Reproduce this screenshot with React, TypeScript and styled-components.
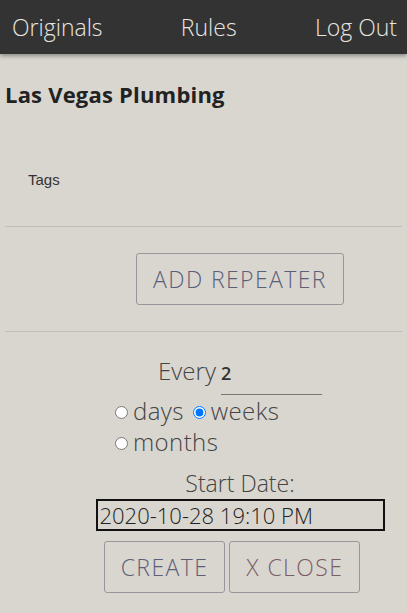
import React from "react";
import styled, { createGlobalStyle } from "styled-components";

const GlobalStyle = createGlobalStyle`
  * { box-sizing: border-box; }
  body {
    margin: 0;
    background: #d9d6d0;
    font-family: "Open Sans", "Lato", sans-serif;
    color: #333;
  }
`;

const NavBar = styled.nav`
  height: 54px;
  background: #333333;
  display: flex;
  align-items: center;
  justify-content: space-between;
  padding: 0 10px 0 12px;
  box-shadow: 0 2px 4px rgba(0, 0, 0, 0.35);
`;

const NavLink = styled.a`
  color: #e8e6e1;
  font-size: 23px;
  font-weight: 300;
  text-decoration: none;
`;

const Page = styled.main`
  padding: 0 5px;
`;

const Title = styled.h2`
  margin: 25px 0 0;
  font-size: 22px;
  font-weight: 700;
  letter-spacing: 0.2px;
  color: #222;
`;

const TagsLabel = styled.div`
  margin: 62px 0 0 23px;
  font-family: "Liberation Sans", Arial, sans-serif;
  font-size: 15px;
  color: #333;
`;

const Divider = styled.hr<{ $flush?: boolean }>`
  margin: ${(p) => (p.$flush ? "0" : "38px 0 0")};
  border: 0;
  border-top: 1px solid #c2bfba;
`;

const Centered = styled.div`
  display: flex;
  flex-direction: column;
  align-items: center;
  padding-left: 73px;
`;

const Button = styled.button<{ $tone: "blue" | "red" }>`
  background: transparent;
  border: 1px solid #98969a;
  border-radius: 3px;
  height: 52px;
  padding: 0 16px;
  font-family: "Open Sans", "Lato", sans-serif;
  font-size: 23px;
  font-weight: 300;
  letter-spacing: 1.4px;
  color: ${(p) => (p.$tone === "blue" ? "#5b6079" : "#7d5c64")};
`;

const RepeaterRow = styled(Centered)`
  margin-top: 26px;
  margin-bottom: 26px;
`;

const Form = styled(Centered)`
  margin-top: 22px;
`;

const EveryRow = styled.div`
  display: flex;
  align-items: baseline;
  font-size: 24px;
  font-weight: 300;
  color: #444;
`;

const NumberInput = styled.input`
  width: 101px;
  margin-left: 5px;
  border: 0;
  border-bottom: 1px solid #777;
  background: transparent;
  font-family: "Open Sans", sans-serif;
  font-size: 18px;
  font-weight: 600;
  color: #333;
  padding: 0 0 9px;
  outline: none;
`;

const RadioGroup = styled.div`
  width: 190px;
  margin-left: -60px;
  display: flex;
  flex-wrap: wrap;
  column-gap: 9px;
`;

const RadioLabel = styled.label`
  display: flex;
  align-items: center;
  height: 31px;
  font-size: 24px;
  font-weight: 300;
  letter-spacing: 0.4px;
  color: #444;
  input {
    margin: 3px 5px 0 0;
    width: 13px;
    height: 13px;
  }
`;

const StartLabel = styled.div`
  margin-top: 10px;
  font-size: 23px;
  font-weight: 300;
  color: #444;
`;

const DateInput = styled.input`
  width: 289px;
  height: 32px;
  border: 2px solid #111;
  background: transparent;
  padding: 0 2px;
  font-family: "Open Sans", sans-serif;
  font-size: 22px;
  font-weight: 300;
  color: #222;
`;

const ButtonRow = styled.div`
  margin-top: 10px;
  margin-left: -16px;
  display: flex;
  gap: 4px;
`;

export default function App() {
  return (
    <>
      <GlobalStyle />
      <NavBar>
        <NavLink>Originals</NavLink>
        <NavLink>Rules</NavLink>
        <NavLink>Log Out</NavLink>
      </NavBar>
      <Page>
        <Title>Las Vegas Plumbing</Title>
        <TagsLabel>Tags</TagsLabel>
        <Divider />
        <RepeaterRow>
          <Button $tone="blue">ADD REPEATER</Button>
        </RepeaterRow>
        <Divider $flush />
        <Form>
          <EveryRow>
            Every
            <NumberInput defaultValue="2" />
          </EveryRow>
          <RadioGroup>
            <RadioLabel>
              <input type="radio" name="unit" />
              days
            </RadioLabel>
            <RadioLabel>
              <input type="radio" name="unit" defaultChecked />
              weeks
            </RadioLabel>
            <RadioLabel>
              <input type="radio" name="unit" />
              months
            </RadioLabel>
          </RadioGroup>
          <StartLabel>Start Date:</StartLabel>
          <DateInput defaultValue="2020-10-28 19:10 PM" />
          <ButtonRow>
            <Button $tone="blue">CREATE</Button>
            <Button $tone="red">X CLOSE</Button>
          </ButtonRow>
        </Form>
      </Page>
    </>
  );
}
